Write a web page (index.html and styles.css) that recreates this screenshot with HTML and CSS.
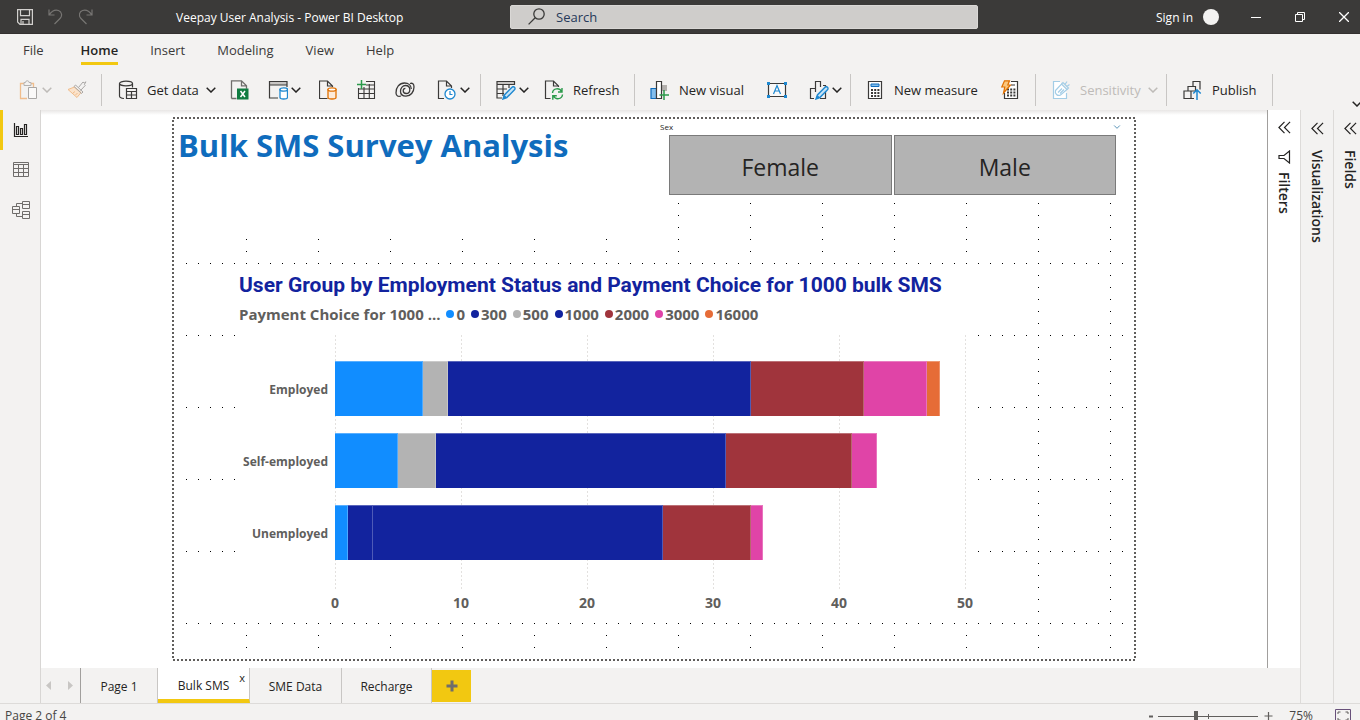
FILE: index.html
```html
<!DOCTYPE html>
<html lang="en">
<head>
<meta charset="utf-8">
<title>Veepay User Analysis - Power BI Desktop</title>
<link rel="stylesheet" href="styles.css">
</head>
<body>
<svg class="defs" aria-hidden="true">
  <symbol id="chev" viewBox="0 0 10 6"><path d="M.7.7 5 5 9.3.7" fill="none" stroke="currentColor" stroke-width="1.5"/></symbol>
  <symbol id="dbl" viewBox="0 0 14 14"><path d="M7 1 1 7l6 6M13 1 7 7l6 6" fill="none" stroke="currentColor" stroke-width="1.3"/></symbol>
  <symbol id="pencil" viewBox="0 0 14 14"><path d="M1 13l1.4-4L10 1.300a1.600 1.600 0 0 1 2.500 2.500L4.800 11.600z" fill="#c7e4f7" stroke="#1e88d0" stroke-width="1.4"/><path d="M1 13l1.400-4 2.600 2.600z" fill="#1e88d0"/></symbol>
</svg>
<div class="app">
  <header class="titlebar">
    <div class="quick">
      <button aria-label="Save"><svg width="16" height="16" viewBox="0 0 16 16" fill="none" stroke="#d2d0ce" stroke-width="1.200"><path d="M.6.6h14.800v14.800H3L.6 13z"/><path d="M3.500.6v6h9v-6M4 15.400v-5h8v5M6 12v3"/></svg></button>
      <button aria-label="Undo"><svg width="16" height="16" viewBox="0 0 16 16" fill="none" stroke="#777573" stroke-width="1.200"><path d="M1 .5v5.500h5.500M1.200 5.800C3.500 2.500 7 .3 10.500 1.500s4 5.500 1.500 8L6.500 15"/></svg></button>
      <button aria-label="Redo"><svg width="16" height="16" viewBox="0 0 16 16" fill="none" stroke="#777573" stroke-width="1.200"><path d="M13 .5v5.500H7.500M12.800 5.800C10.500 2.500 7 .3 3.500 1.500s-4 5.500-1.500 8L7.500 15"/></svg></button>
    </div>
    <h1 class="app-title">Veepay User Analysis - Power BI Desktop</h1>
    <label class="search">
      <svg width="17" height="17" viewBox="0 0 17 17" fill="none" stroke="#3b3a39" stroke-width="1.300"><circle cx="11" cy="6" r="5.200"/><path d="M7.200 9.800.6 16.400"/></svg>
      <input type="text" placeholder="Search" aria-label="Search">
    </label>
    <div class="window">
      <button class="signin">Sign in<span class="avatar"></span></button>
      <button aria-label="Minimize"><svg width="10" height="10" viewBox="0 0 10 10"><path d="M0 5.500h10" stroke="#fff"/></svg></button>
      <button aria-label="Restore"><svg width="10" height="10" viewBox="0 0 10 10" fill="none" stroke="#fff"><path d="M.5 2.500h7v7h-7zM2.500 2.500v-2h7v7h-2"/></svg></button>
      <button aria-label="Close"><svg width="10" height="10" viewBox="0 0 10 10"><path d="M0 0l10 10M10 0 0 10" stroke="#fff" stroke-width="1.300"/></svg></button>
    </div>
  </header>

  <nav class="menu">
    <button>File</button><button class="active">Home</button><button>Insert</button><button>Modeling</button><button>View</button><button>Help</button>
  </nav>

  <div class="toolbar">
    <div class="group g-clip disabled">
      <button aria-label="Paste"><svg class="ic" viewBox="0 0 20 20" fill="none"><path d="M5 3.500H1.500v15H8" stroke="#f0bd8c" stroke-width="1.300"/><path d="M12 3.500h2.500V7" stroke="#f0bd8c" stroke-width="1.300"/><path d="M5 5.500v-3h1.500a1.600 1.600 0 0 1 3.500 0h2v3z" stroke="#b5b3b1"/><path d="M9.500 7.500h8v11h-8z" fill="#faf9f8" stroke="#a9a7a5"/></svg><svg class="chev"><use href="#chev"/></svg></button>
      <button aria-label="Format painter"><svg class="ic" viewBox="0 0 20 20" fill="none"><path d="M7.500 7 1 9.500l9 8 4-5z" fill="#fbe3cb" stroke="#f0bd8c"/><path d="M6 13l2-1.500M8.500 15l2-2" stroke="#f0bd8c"/><path d="M8.500 5l7.500 7-1.500 1.500L7 6.500zM11.500 7.500l4.500-5.500 1.200 1 1.800-1.200-1.600 2.500.8 1.200-4.700 5" stroke="#a9a7a5"/></svg></button>
    </div>
    <div class="group g-data">
      <button class="near"><svg class="ic" viewBox="0 0 20 20" fill="none" stroke="#3b3a39" stroke-width="1.200"><ellipse cx="8" cy="3.500" rx="6.500" ry="2.300"/><path d="M1.500 3.500v12.500c0 1.500 2 2.300 4.500 2.500M14.500 3.500v4M8.500 8.500h10v10h-10zM8.500 11.500h10M8.500 15h10M13.500 11.500v7"/></svg><span>Get data</span><svg class="chev"><use href="#chev"/></svg></button>
      <button aria-label="Excel workbook"><svg class="ic" viewBox="0 0 20 20" fill="none"><path d="M1.500 18.500V.8h10l5 5v3M11.500.8v5h5M1.500 18.500h5" stroke="#6f6d6b" stroke-width="1.300"/><path d="M7 8.500h11.500v11H7z" fill="#107c41"/><path d="M10.500 11l4.500 6M15 11l-4.500 6" stroke="#fff" stroke-width="1.500"/></svg></button>
      <button aria-label="Data hub"><svg class="ic" viewBox="0 0 20 20" fill="none"><path d="M1.500 1.500H19v3.500H1.500z" fill="#c8c6c4"/><path d="M10 18H1.500V1.500H19V7M1.500 5H19" stroke="#3b3a39" stroke-width="1.200"/><path d="M12 9.500v8c0 2 7.500 2 7.500 0v-8z" fill="#fff" stroke="#1e88d0" stroke-width="1.300"/><ellipse cx="15.750" cy="9.500" rx="3.800" ry="1.700" fill="#fff" stroke="#1e88d0" stroke-width="1.300"/></svg><svg class="chev"><use href="#chev"/></svg></button>
      <button aria-label="SQL Server"><svg class="ic" viewBox="0 0 20 20" fill="none"><path d="M8.500 18.500h-8V1h8l5 5v1M8.500 1v5h5" stroke="#3b3a39" stroke-width="1.200"/><path d="M9 9.500v8c0 2 8 2 8 0v-8z" fill="#fdebd9" stroke="#e07000" stroke-width="1.300"/><ellipse cx="13" cy="9.500" rx="4" ry="1.700" fill="#fff" stroke="#e07000" stroke-width="1.300"/></svg></button>
      <button aria-label="Enter data"><svg class="ic" viewBox="0 0 20 20" fill="none"><path d="M9 1.500h8.500v17h-16V8M1.500 13.500h16M1.500 9h16M7 7v11.500M12.300 4v14.500M9 5h8.500" stroke="#3b3a39" stroke-width="1.100"/><path d="M4.500 0v9M0 4.500h9" stroke="#2b9a4b" stroke-width="1.500"/></svg></button>
      <button aria-label="Dataverse"><svg class="ic" viewBox="0 0 20 20" fill="none" stroke="#3b3a39" stroke-width="1.300"><path d="M15 3.500c2.500-.8 4 .5 4 3.500C19 12 15.500 16.200 11 16.200c-3.500 0-5.500-2-5.500-5 0-3.300 2.300-5.700 5-5.700 2.500 0 4.300 1.800 4.300 4.200 0 2.200-1.600 3.800-3.600 3.800-1.800 0-3-1.200-3-2.700 0-1.400 1-2.400 2.200-2.400"/><path d="M6 16c-2.800.9-4.800 0-5-3C.7 7.500 4.500 3 9.500 3c4 0 6.800 2.500 6.800 6"/></svg></button>
      <button class="far" aria-label="Recent sources"><svg class="ic" viewBox="0 0 20 20" fill="none"><path d="M7 18.500H1.500V1h8l5 5v2M9.500 1v5h5" stroke="#3b3a39" stroke-width="1.200"/><circle cx="13" cy="14" r="5" fill="#fff" stroke="#1e88d0" stroke-width="1.300"/><path d="M13 11v3.500h2.500" stroke="#1e88d0" stroke-width="1.200"/></svg><svg class="chev"><use href="#chev"/></svg></button>
    </div>
    <div class="group g-query">
      <button aria-label="Transform data"><svg class="ic" viewBox="0 0 20 20" fill="none"><path d="M1 1.500h17.500V4H1z" fill="#c8c6c4"/><path d="M6 18H1V1.500h17.500V5M1 4.500h17.500M1 9h10M1 13.500h7M7 4.500V16M13 4.500V8" stroke="#3b3a39" stroke-width="1.200"/></svg><svg class="pen"><use href="#pencil"/></svg><svg class="chev"><use href="#chev"/></svg></button>
      <button><svg class="ic" viewBox="0 0 20 20" fill="none"><path d="M6.500 18.500h-5V1h8l5 5v1M9.500 1v5h5" stroke="#3b3a39" stroke-width="1.200"/><path d="M8.500 13c.5-5 7-5.500 9-1.500M18 8v4h-4M18.500 14.500c-.5 5-7 5.500-9 1.500M8.800 19.800v-4h4" stroke="#2b9a4b" stroke-width="1.400"/></svg><span>Refresh</span></button>
    </div>
    <div class="group g-insert">
      <button><svg class="ic" viewBox="0 0 20 20" fill="none"><path d="M1 8.500h5.500v10H1z" fill="#83beec" stroke="#0f6cbd" stroke-width="1.200"/><path d="M11 5h6v6h-6z" fill="#b3b0ad"/><path d="M6.500 1.500h5v17h-5z" fill="#fff" stroke="#3b3a39" stroke-width="1.200"/><path d="M14 10v10M9.500 15h9.500" stroke="#2b9a4b" stroke-width="1.500"/></svg><span>New visual</span></button>
      <button aria-label="Text box"><svg class="ic" viewBox="0 0 20 20" fill="none"><path d="M1.500 3.500h17v13h-17z" fill="#faf9f8" stroke="#3b3a39" stroke-width="1.200"/><path d="M0 2h3v3H0zM17 2h3v3h-3zM0 15h3v3H0zM17 15h3v3h-3z" fill="#1e88d0"/><path d="M6.500 14 10 5.500 13.500 14M7.700 11h4.600" stroke="#1e88d0" stroke-width="1.200"/></svg></button>
      <button aria-label="More visuals"><svg class="ic" viewBox="0 0 20 20" fill="none" stroke="#3b3a39" stroke-width="1.200"><path d="M5 18.500H1.500v-10h5M6.500 12V1.500h5V7M14 5.500h2.500v13H11"/></svg><svg class="pen"><use href="#pencil"/></svg><svg class="chev"><use href="#chev"/></svg></button>
    </div>
    <div class="group g-calc">
      <button><svg class="ic" viewBox="0 0 20 20" fill="none"><path d="M3.500 1.500h13v17h-13z" fill="#fff" stroke="#3b3a39" stroke-width="1.200"/><path d="M6 4h8v2.500H6z" fill="#83beec" stroke="#0f6cbd"/><path d="M6 10h8.500M6 13h8.500M6 16h8.500" stroke="#3b3a39" stroke-width="2" stroke-dasharray="2 1.200"/></svg><span>New measure</span></button>
      <button aria-label="Quick measure"><svg class="ic" viewBox="0 0 20 20" fill="none"><path d="M11 1.500h6.500v17h-13V13" fill="#fff" stroke="#3b3a39" stroke-width="1.200"/><path d="M11 5h4" stroke="#777" stroke-width="1.500"/><path d="M7 9.500h8.500M7 12.500h8.500M7 15.500h8.500" stroke="#3b3a39" stroke-width="2" stroke-dasharray="2 1.200"/><path d="M4.500.8h5L7.800 5h2.700L3.500 13l1.300-6H1.800z" fill="#fbc77d" stroke="#e07000" stroke-width="1.200"/></svg></button>
    </div>
    <div class="group g-sens disabled">
      <button><svg class="ic" viewBox="0 0 20 20" fill="none" stroke="#a3cde6" stroke-width="1.200"><path d="M9 1.500H2.500v17h13V13" fill="#fff"/><path d="M4.500 10.500 10.500 4l5.500 5.500-6.500 5.500c-3 1.500-6-1.500-5-4.500z" fill="#fff"/><path d="M7 12.500l4-4M9 13.500l4-4M10.500 4 12 2.500l5.500 5.500L16 9.500M14 4.500l2-3M16 6.500l2.500-2"/></svg><span>Sensitivity</span><svg class="chev"><use href="#chev"/></svg></button>
    </div>
    <div class="group g-share">
      <button><svg class="ic" viewBox="0 0 20 20" fill="none" stroke="#3b3a39" stroke-width="1.200"><path d="M5 11V6.500h5v-5h7v8M11 18.500H1V11h7v7.500M10 6.500h2.500V11M8 11h4"/><path d="M14 20V10M10.300 13.500 14 9.800l3.700 3.700" stroke="#1e88d0" stroke-width="1.500"/></svg><span>Publish</span></button>
    </div>
    <button class="collapse" aria-label="Collapse ribbon"><svg class="chev"><use href="#chev"/></svg></button>
  </div>

  <div class="workspace">
    <nav class="views">
      <button class="active" aria-label="Report view"><svg width="18" height="18" viewBox="0 0 18 18" fill="none" stroke="#252423" stroke-width="1.200"><path d="M2.500 2v13.500H16"/><path d="M4.500 5.500h2v8h-2zM8.500 7.500h2v6h-2zM12.500 3.500h2v10h-2z"/></svg></button>
      <button aria-label="Data view"><svg width="18" height="18" viewBox="0 0 18 18" fill="none" stroke="#6f6d6b"><path d="M1.500 1.500h15v14h-15zM1.500 3.500h15M1.500 7.500h15M1.500 11.500h15M6.500 3.500v12M11.500 3.500v12"/></svg></button>
      <button aria-label="Model view"><svg width="18" height="18" viewBox="0 0 18 18" fill="none" stroke="#6f6d6b"><path d="M.5 5.500h7v7h-7zM.5 8.500h7M10.500.5h7v7h-7zM10.500 3.500h7M10.500 10.500h7v7h-7zM10.500 13.500h7M4.500 5.500v-3h6M4.500 12.500v3h6"/></svg></button>
    </nav>

    <div class="center">
      <div class="stage">
        <main class="canvas">
          <div class="page">
            <svg class="grid" aria-hidden="true">
              <defs>
                <pattern id="rows" width="12" height="72" patternUnits="userSpaceOnUse"><rect x="2" y="2" width="1" height="1"/></pattern>
                <pattern id="cols" width="72" height="12" patternUnits="userSpaceOnUse"><rect x="2" y="2" width="1" height="1"/></pattern>
              </defs>
              <rect class="dots" x="12" y="12" fill="url(#rows)"/>
              <rect class="dots" x="12" y="12" fill="url(#cols)"/>
              <rect class="frame" x="1" y="1"/>
            </svg>
            <div class="top">
              <h2 class="page-title">Bulk SMS Survey Analysis</h2>
              <section class="slicer">
                <div class="slicer-head"><span>Sex</span><svg class="mini"><use href="#chev"/></svg></div>
                <div class="choices"><button>Female</button><button>Male</button></div>
              </section>
            </div>
            <section class="chart">
              <h3>User Group by Employment Status and Payment Choice for 1000 bulk SMS</h3>
              <ul class="legend">
                <li class="caption">Payment Choice for 1000 ...</li>
                <li><i class="c0"></i>0</li><li><i class="c1000"></i>300</li><li><i class="c500"></i>500</li><li><i class="c1000"></i>1000</li><li><i class="c2000"></i>2000</li><li><i class="c3000"></i>3000</li><li><i class="c16000"></i>16000</li>
              </ul>
              <div class="plot">
                <div class="cats"><span>Employed</span><span>Self-employed</span><span>Unemployed</span></div>
                <div class="bars">
                  <div class="bar"><b class="c0" style="width:14%"></b><b class="c500" style="width:4%"></b><b class="c1000" style="width:48%"></b><b class="c2000" style="width:18%"></b><b class="c3000" style="width:10%"></b><b class="c16000" style="width:2%"></b></div>
                  <div class="bar"><b class="c0" style="width:10%"></b><b class="c500" style="width:6%"></b><b class="c1000" style="width:46%"></b><b class="c2000" style="width:20%"></b><b class="c3000" style="width:4%"></b></div>
                  <div class="bar"><b class="c0" style="width:2%"></b><b class="c1000" style="width:4%"></b><b class="c1000" style="width:46%"></b><b class="c2000" style="width:14%"></b><b class="c3000" style="width:2%"></b></div>
                </div>
                <div class="axis"><span>0</span><span>10</span><span>20</span><span>30</span><span>40</span><span>50</span></div>
              </div>
            </section>
          </div>
        </main>
        <button class="pane filters"><svg class="dbl"><use href="#dbl"/></svg><svg class="funnel" viewBox="0 0 14 14" fill="none" stroke="#252423" stroke-width="1.200"><path d="M12.500 1v12L7 8.500H2V5.500h5z"/></svg><span>Filters</span></button>
      </div>
      <div class="tabs">
        <div class="arrows"><button aria-label="Previous page"><svg width="5" height="9" viewBox="0 0 5 9"><path d="M5 0v9L0 4.500z" fill="#c8c6c4"/></svg></button><button aria-label="Next page"><svg width="5" height="9" viewBox="0 0 5 9"><path d="M0 0v9l5-4.500z" fill="#c8c6c4"/></svg></button></div>
        <button class="tab t1">Page 1</button>
        <div class="tab t2 current"><button>Bulk SMS</button><button class="close" aria-label="Delete page">x</button></div>
        <button class="tab t2">SME Data</button>
        <button class="tab t3">Recharge</button>
        <button class="add" aria-label="New page"><svg width="12" height="12" viewBox="0 0 12 12"><path d="M6 .5v11M.5 6h11" stroke="#6f6d6b" stroke-width="3"/></svg></button>
      </div>
    </div>

    <button class="pane viz"><svg class="dbl"><use href="#dbl"/></svg><span>Visualizations</span></button>
    <button class="pane fields"><svg class="dbl"><use href="#dbl"/></svg><span>Fields</span></button>
  </div>

  <footer class="status">
    <span class="count">Page 2 of 4</span>
    <button aria-label="Zoom out"><svg width="6" height="10" viewBox="0 0 6 10"><path d="M1 5.500h4" stroke="#605e5c" stroke-width="2"/></svg></button>
    <span class="slider"><input type="range" min="0" max="100" value="37" aria-label="Zoom"></span>
    <button aria-label="Zoom in"><svg width="9" height="10" viewBox="0 0 9 10"><path d="M4.500 1v8M.5 5h8" stroke="#605e5c" stroke-width="1.200"/></svg></button>
    <output>75%</output>
    <button class="fit" aria-label="Fit to page"><svg width="16" height="14" viewBox="0 0 16 14" fill="none" stroke="#605e5c"><path d="M.5.5h15v13H.5z" stroke="#68507a"/><path d="M3 5V3h2.500M10.500 3H13v2M3 9v2h2.500M13 9v2h-2.500"/></svg></button>
  </footer>
</div>
</body>
</html>
```
FILE: styles.css
```css
* { box-sizing: border-box; }
body {
  margin: 0;
  overflow: hidden;
  background: #f3f2f1;
  color: #252423;
  font-family: "Open Sans", "Noto Sans", sans-serif;
  font-size: 13px;
}
button, input { font: inherit; color: inherit; }
button { background: none; border: 0; padding: 0; margin: 0; display: inline-flex; align-items: center; white-space: nowrap; }
h1, h2, h3, ul { margin: 0; padding: 0; font-weight: normal; }
svg { flex: none; display: block; }
.defs { position: absolute; width: 0; height: 0; }
.app { height: 100vh; display: flex; flex-direction: column; }

/* title bar */
.titlebar { flex: none; height: 34px; background: #3b3a39; color: #fff; display: flex; align-items: center; border-bottom: 1px solid #33302f; }
.quick { display: flex; gap: 15px; padding-left: 17px; width: 176px; }
.app-title { font-size: 12px; width: 334px; white-space: nowrap; padding-top: 2px; }
.search { flex: 0 1 468px; height: 24px; display: flex; align-items: center; gap: 11px; padding-left: 17px; background: #cfcdcb; border: 1px solid #dad8d6; border-radius: 2px; }
.search input { flex: 1; min-width: 0; border: 0; background: none; outline: 0; padding: 0; }
.search input::placeholder { color: #26395a; opacity: 1; }
.window { margin-left: auto; display: flex; align-items: center; gap: 34px; padding-right: 11px; }
.signin { font-size: 12px; gap: 10px; margin-right: -2px; padding-top: 1px; }
.avatar { width: 16px; height: 16px; border-radius: 50%; background: #f3f2f1; }

/* menu */
.menu { flex: none; height: 36px; display: flex; gap: 32px; padding-left: 23px; align-items: flex-start; }
.menu button { height: 31px; border-bottom: 3px solid transparent; padding-top: 4px; color: #3b3a39; }
.menu .active { border-color: #f2c811; font-weight: 600; color: #252423; }
.menu button:first-child { margin-right: 5px; }

/* toolbar */
.toolbar { flex: none; height: 40px; display: flex; align-items: center; position: relative; }
.group { height: 32px; flex: none; border-right: 1px solid #c8c6c4; display: flex; align-items: center; }
.group button { gap: 9px; position: relative; }
.ic { width: 20px; height: 20px; }
.chev { width: 10px; height: 6px; margin-left: -6px; }
.group span + .chev { margin-left: -2px; }
.pen { position: absolute; left: 6px; top: 6px; width: 14px; height: 14px; }
.disabled { color: #bebbb8; }
.g-clip { width: 102px; padding-left: 19px; gap: 15px; }
.g-data { width: 379px; padding-left: 16px; gap: 18px; }
.g-data .near { margin-right: -4px; }
.g-data .far { margin-left: 4px; }
.g-query { width: 154px; padding-left: 15px; gap: 15px; }
.g-insert { width: 216px; padding: 0 8px 0 15px; justify-content: space-between; }
.g-calc { width: 185px; padding: 0 15px 0 14px; justify-content: space-between; }
.g-sens { width: 131px; padding: 0 9px 0 15px; justify-content: space-between; }
.g-share { width: 106px; padding-left: 16px; }
.collapse { position: absolute; right: -2px; bottom: 3px; }

/* workspace */
.workspace { flex: 1; min-height: 0; display: flex; border-bottom: 1px solid #dddbd9; }
.views { flex: none; width: 41px; border-right: 1px solid #d8d6d4; display: flex; flex-direction: column; }
.views button { height: 40px; justify-content: center; border-left: 3px solid transparent; padding-right: 2px; }
.views .active { border-color: #f2c811; }
.center { flex: 1; min-width: 0; display: flex; flex-direction: column; }
.stage { flex: 1; min-height: 0; display: flex; background: #fff; }
.canvas { flex: 1; min-width: 0; padding: 7px 131px; display: flex; background: linear-gradient(#e8e6e5, #fff 5px); }
.page { flex: 1; min-width: 0; position: relative; background: #fff; padding: 2px; }
.grid { position: absolute; inset: 0; width: 100%; height: 100%; }
.dots { width: calc(100% - 24px); height: calc(100% - 24px); }
.frame { width: calc(100% - 2px); height: calc(100% - 2px); fill: none; stroke: #605e5c; stroke-width: 2; stroke-dasharray: 2 2; shape-rendering: crispEdges; }
.top { position: relative; display: flex; align-items: flex-start; height: 143px; padding-right: 6px; }
.page-title { flex: 0 0 482px; height: 113px; background: #fff; padding: 4px; font-size: 31px; line-height: 44px; font-weight: 700; color: #0f6cbd; white-space: nowrap; }
.slicer { flex: 1; background: #fff; padding: 2px 12px 3px 13px; }
.slicer-head { display: flex; align-items: center; justify-content: space-between; font-size: 8px; line-height: 11px; margin: 0 -9px 3px; }
.mini { width: 8px; height: 4px; color: #5a94b8; margin-right: 4px; }
.choices { display: grid; grid-template-columns: 1fr 1fr; gap: 2px; }
.choices button { height: 60px; justify-content: center; background: #b3b3b3; border: 1px solid #7a7a7a; font-size: 23px; padding-top: 3px; }

.chart { position: relative; background: #fff; margin: 3px 158px 0 63px; padding: 0 11px 0 2px; height: 355px; }
.chart h3 { font-family: Roboto, sans-serif; font-weight: 700; font-size: 21px; line-height: 34px; padding-top: 3px; color: #12239e; white-space: nowrap; }
.legend { list-style: none; display: flex; align-items: center; gap: 6px; height: 24px; font-size: 15px; font-weight: 700; color: #605e5c; white-space: nowrap; }
.legend li { display: flex; align-items: center; gap: 2px; }
.legend i { width: 8px; height: 8px; border-radius: 50%; }
.c0 { background: #118dff; }
.c500 { background: #b3b3b3; }
.c1000 { background: #12239e; }
.c2000 { background: #a0343c; }
.c3000 { background: #e044a7; }
.c16000 { background: #e66c37; }
.plot { display: grid; grid-template-columns: 89px 1fr; column-gap: 7px; margin-top: 9px; color: #605e5c; font-weight: 700; }
.cats, .bars { display: flex; flex-direction: column; gap: 17px; padding: 26px 0 31px; }
.cats span { height: 55px; line-height: 58px; text-align: right; font-size: 12px; white-space: nowrap; }
.bars { margin-right: -1px; padding-right: 1px; background: repeating-linear-gradient(transparent 0 2px, #fff 2px 4px), repeating-linear-gradient(90deg, #e3e1df 0 1px, transparent 1px 126px); }
.bar { height: 55px; display: flex; }
.bar b { border-right: 1px solid rgba(255, 255, 255, .25); border-top: 1px solid rgba(255, 255, 255, .3); }
.axis { grid-column: 2; display: flex; justify-content: space-between; margin: 0 -20px; font-size: 14px; line-height: 24px; }
.axis span { width: 40px; text-align: center; }

/* side panes */
.pane { writing-mode: vertical-rl; flex: none; font-size: 14px; font-weight: 600; align-items: center; justify-content: flex-start; }
.dbl { width: 13px; height: 13px; margin-bottom: 15px; }
.filters { width: 33px; border-left: 1px solid #a19f9d; padding-top: 11px; }
.filters .funnel { width: 14px; height: 14px; margin-bottom: 8px; }
.filters .dbl { margin-bottom: 16px; }
.viz { width: 33px; border-left: 1px solid #dddbd9; padding-top: 12px; }
.fields { width: 27px; border-left: 1px solid #dddbd9; padding: 12px 0 0 6px; }

/* page tabs */
.tabs { flex: none; height: 35px; display: flex; font-size: 12px; }
.arrows { width: 40px; border-right: 1px solid #a19f9d; display: flex; align-items: center; justify-content: space-between; padding: 0 7px 0 5px; }
.tab { justify-content: center; align-items: center; border-right: 1px solid #c8c6c4; position: relative; height: 35px; display: flex; padding-top: 1px; }
.t1 { width: 77px; }
.t2 { width: 92px; }
.t3 { width: 90px; }
.current { background: #fff; border-bottom: 4px solid #f2c811; padding-top: 4px; }
.close { position: absolute; right: 4px; top: 2px; font-size: 11px; }
.add { width: 39px; height: 32px; margin-top: 2px; background: #f2c811; justify-content: center; }

/* status bar */
.status { flex: none; height: 16px; overflow: hidden; display: flex; align-items: flex-start; padding: 0 9px 0 5px; font-size: 12px; line-height: 24px; color: #484644; }
.count { margin-right: auto; }
.status button { height: 24px; }
.slider { position: relative; height: 24px; margin: 0 6px 0 4px; display: flex; align-items: center; }
.slider::after { content: ""; position: absolute; left: 50px; top: 10px; width: 1px; height: 5px; background: #605e5c; }
.slider input { appearance: none; width: 100px; height: 12px; margin: 0; background: linear-gradient(#605e5c, #605e5c) center / 100% 1px no-repeat; }
.slider input::-webkit-slider-thumb { appearance: none; width: 4px; height: 11px; background: #605e5c; }
.status output { margin: 0 22px 0 16px; }
```
